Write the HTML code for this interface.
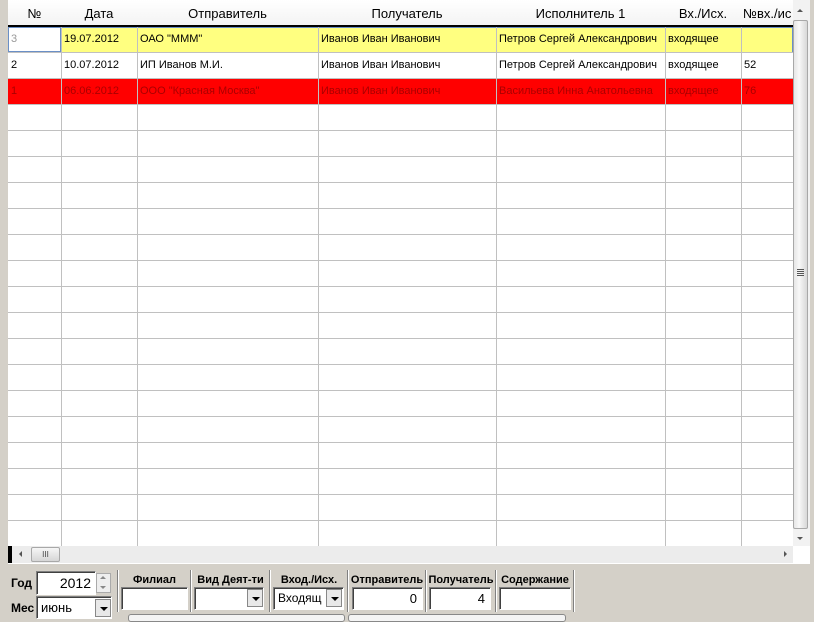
<!DOCTYPE html>
<html><head><meta charset="utf-8"><style>
*{box-sizing:border-box;margin:0;padding:0}
body{width:814px;height:619px;background:#d4d0c8;position:relative;overflow:hidden;font-family:"Liberation Sans",Arial,sans-serif;font-size:11px;color:#000}
.a{position:absolute}
.grid{left:8px;top:0;width:802px;height:564px;background:#fff;overflow:hidden}
.hd{top:0;height:26px;font-size:13px;text-align:center;line-height:28px;color:#000}
.vl{width:1px;background:#c0c0c0;top:27px;height:519px}
.hl{height:1px;background:#c0c0c0;left:0;width:785px}
.cell{height:25px;line-height:25px;padding-left:3px;font-size:11px;white-space:nowrap;overflow:hidden}
.in{background:#fff;border:1px solid #7f7f7f;border-right-color:#fff;border-bottom-color:#fff;box-shadow:inset 1px 1px 0 #404040}
.lbl{font-weight:bold;font-size:11px;text-align:center}
.dd{width:16px;height:18px;background:#e8e8e8;border:1px solid #888;}
.dd:after{content:"";position:absolute;left:4px;top:7px;border:4px solid transparent;border-top:4px solid #000;border-bottom:0}
.sep{width:2px;border-left:1px solid #808080;border-right:1px solid #fff;top:570px;height:42px}
</style></head><body>
<div class="a grid">
 <div class="a" style="left:0;top:0;width:785px;height:26px;background:linear-gradient(#fff,#f3f3f3)"></div>
 <div class="a hd" style="left:0;width:53px">№</div>
 <div class="a hd" style="left:53px;width:76px">Дата</div>
 <div class="a hd" style="left:129px;width:181px">Отправитель</div>
 <div class="a hd" style="left:310px;width:178px">Получатель</div>
 <div class="a hd" style="left:488px;width:169px">Исполнитель 1</div>
 <div class="a hd" style="left:657px;width:76px">Вх./Исх.</div>
 <div class="a hd" style="left:733px;width:52px;text-align:left;padding-left:2px">№вх./ис</div>
 <div class="a" style="left:0;top:25px;width:785px;height:2px;background:#000"></div>
 <div class="a" style="left:0;top:27px;width:785px;height:25px;background:#ffff80"></div>
 <div class="a" style="left:0;top:79px;width:785px;height:25px;background:#ff0000"></div>
 <div class="a" style="left:0;top:27px;width:785px;height:26px;border:1px solid #6a8fc6"></div>
 <div class="a" style="left:0;top:27px;width:53px;height:25px;background:#fff;border:1px solid #6a8fc6"></div>
 <div class="a hl" style="top:52px"></div><div class="a hl" style="top:78px"></div><div class="a hl" style="top:104px"></div><div class="a hl" style="top:130px"></div><div class="a hl" style="top:156px"></div><div class="a hl" style="top:182px"></div><div class="a hl" style="top:208px"></div><div class="a hl" style="top:234px"></div><div class="a hl" style="top:260px"></div><div class="a hl" style="top:286px"></div><div class="a hl" style="top:312px"></div><div class="a hl" style="top:338px"></div><div class="a hl" style="top:364px"></div><div class="a hl" style="top:390px"></div><div class="a hl" style="top:416px"></div><div class="a hl" style="top:442px"></div><div class="a hl" style="top:468px"></div><div class="a hl" style="top:494px"></div><div class="a hl" style="top:520px"></div>
 <div class="a vl" style="left:53px"></div><div class="a vl" style="left:129px"></div><div class="a vl" style="left:310px"></div><div class="a vl" style="left:488px"></div><div class="a vl" style="left:657px"></div><div class="a vl" style="left:733px"></div>
 <div class="a cell" style="left:0;top:27px;color:#999">3</div>
 <div class="a cell" style="left:53px;top:27px">19.07.2012</div>
 <div class="a cell" style="left:129px;top:27px">ОАО "МММ"</div>
 <div class="a cell" style="left:310px;top:27px">Иванов Иван Иванович</div>
 <div class="a cell" style="left:488px;top:27px">Петров Сергей Александрович</div>
 <div class="a cell" style="left:657px;top:27px">входящее</div>
 <div class="a cell" style="left:0;top:53px">2</div>
 <div class="a cell" style="left:53px;top:53px">10.07.2012</div>
 <div class="a cell" style="left:129px;top:53px">ИП Иванов М.И.</div>
 <div class="a cell" style="left:310px;top:53px">Иванов Иван Иванович</div>
 <div class="a cell" style="left:488px;top:53px">Петров Сергей Александрович</div>
 <div class="a cell" style="left:657px;top:53px">входящее</div>
 <div class="a cell" style="left:733px;top:53px">52</div>
 <div class="a cell" style="left:0;top:79px;color:#a00">1</div>
 <div class="a cell" style="left:53px;top:79px;color:#a00">06.06.2012</div>
 <div class="a cell" style="left:129px;top:79px;color:#a00">ООО "Красная Москва"</div>
 <div class="a cell" style="left:310px;top:79px;color:#a00">Иванов Иван Иванович</div>
 <div class="a cell" style="left:488px;top:79px;color:#a00">Васильева Инна Анатольевна</div>
 <div class="a cell" style="left:657px;top:79px;color:#a00">входящее</div>
 <div class="a cell" style="left:733px;top:79px;color:#a00">76</div>
 <div class="a" style="left:785px;top:0;width:17px;height:546px;background:#f2f2f2"></div>
 <div class="a" style="left:785px;top:20px;width:15px;height:509px;background:linear-gradient(90deg,#e6e6e6,#f8f8f8 40%,#d8d8d8);border:1px solid #a8a8a8;border-radius:2px"></div>
 <div class="a" style="left:789px;top:269px;width:7px;height:7px;background:repeating-linear-gradient(#555 0 1px,transparent 1px 2px)"></div>
 <div class="a" style="left:789px;top:9px;border:3px solid transparent;border-bottom:3px solid #555;border-top:0"></div>
 <div class="a" style="left:789px;top:537px;border:3px solid transparent;border-top:3px solid #555;border-bottom:0"></div>
 <div class="a" style="left:0;top:546px;width:785px;height:17px;background:#ececec"></div>
 <div class="a" style="left:0;top:546px;width:4px;height:17px;background:#000"></div>
 <div class="a" style="left:11px;top:551px;border:3px solid transparent;border-right:3px solid #555;border-left:0"></div>
 <div class="a" style="left:23px;top:547px;width:29px;height:15px;background:linear-gradient(#f6f6f6,#d6d6d6);border:1px solid #a8a8a8;border-radius:2px;font-size:8px;text-align:center;line-height:13px;color:#444">III</div>
 <div class="a" style="left:776px;top:551px;border:3px solid transparent;border-left:3px solid #555;border-right:0"></div>
</div>
<div class="a" style="left:11px;top:576px;font-weight:bold;font-size:12px">Год</div>
<div class="a in" style="left:36px;top:571px;width:60px;height:24px;text-align:right;padding-right:4px;font-size:14px;line-height:22px">2012</div>
<div class="a" style="left:96px;top:573px;width:15px;height:20px;background:#eee;border:1px solid #aaa"></div>
<div class="a" style="left:100px;top:576px;border:3px solid transparent;border-bottom:3px solid #888;border-top:0"></div>
<div class="a" style="left:100px;top:586px;border:3px solid transparent;border-top:3px solid #888;border-bottom:0"></div>
<div class="a" style="left:11px;top:601px;font-weight:bold;font-size:12px">Мес</div>
<div class="a in" style="left:36px;top:596px;width:76px;height:23px;padding-left:4px;font-size:13px;line-height:22px">июнь</div>
<div class="a dd" style="left:95px;top:599px"></div>
<div class="a sep" style="left:117px"></div>
<div class="a lbl" style="left:119px;top:574px;width:71px">Филиал</div>
<div class="a in" style="left:121px;top:587px;width:67px;height:23px"></div>
<div class="a sep" style="left:190px"></div>
<div class="a lbl" style="left:192px;top:574px;width:77px">Вид Деят-ти</div>
<div class="a in" style="left:194px;top:587px;width:70px;height:23px"></div>
<div class="a dd" style="left:247px;top:589px"></div>
<div class="a sep" style="left:269px"></div>
<div class="a lbl" style="left:271px;top:574px;width:76px">Вход./Исх.</div>
<div class="a in" style="left:273px;top:587px;width:71px;height:23px;font-size:12px;line-height:21px;padding-left:4px;overflow:hidden">Входящ</div>
<div class="a dd" style="left:326px;top:589px"></div>
<div class="a sep" style="left:347px"></div>
<div class="a lbl" style="left:349px;top:574px;width:76px">Отправитель</div>
<div class="a in" style="left:352px;top:587px;width:71px;height:23px;text-align:right;padding-right:5px;font-size:13px;line-height:21px">0</div>
<div class="a sep" style="left:425px"></div>
<div class="a lbl" style="left:427px;top:574px;width:68px">Получатель</div>
<div class="a in" style="left:429px;top:587px;width:62px;height:23px;text-align:right;padding-right:5px;font-size:13px;line-height:21px">4</div>
<div class="a sep" style="left:495px"></div>
<div class="a lbl" style="left:497px;top:574px;width:76px">Содержание</div>
<div class="a in" style="left:499px;top:587px;width:72px;height:23px"></div>
<div class="a sep" style="left:573px"></div>
<div class="a" style="left:128px;top:614px;width:217px;height:8px;background:#f4f4f4;border:1px solid #888;border-radius:3px"></div>
<div class="a" style="left:348px;top:614px;width:218px;height:8px;background:#f4f4f4;border:1px solid #888;border-radius:3px"></div>
</body></html>
